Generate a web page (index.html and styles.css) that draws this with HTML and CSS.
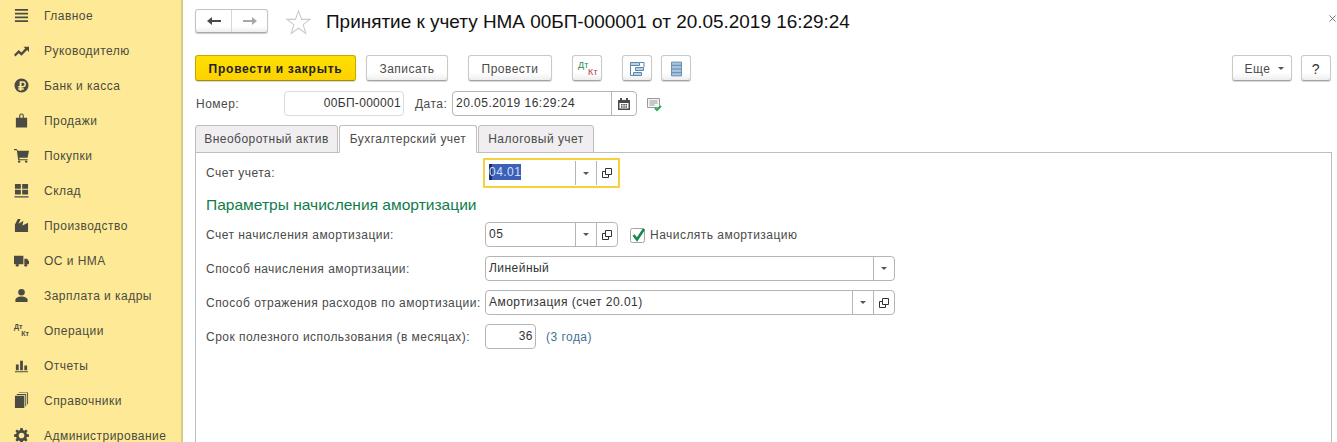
FILE: index.html
```html
<!DOCTYPE html>
<html lang="ru">
<head>
<meta charset="utf-8">
<title>Принятие к учету НМА</title>
<link rel="stylesheet" href="styles.css">
</head>
<body>
<div class="app">
  <nav class="side">
    <a class="nav-item"><svg class="nav-ico" viewBox="0 0 16 16"><path d="M1 1h14v2H1zM1 5h14v2H1zM1 9h14v2H1zM1 13h14v2H1z"/></svg><span>Главное</span></a>
    <a class="nav-item"><svg class="nav-ico" viewBox="0 0 16 16"><path d="M0 12.500l5-5 3 2.500 4-4.500-2-1.500h6v5.500l-2-2-6 6-3-2.500-3.500 3.500z"/></svg><span>Руководителю</span></a>
    <a class="nav-item"><svg class="nav-ico" viewBox="0 0 16 16"><path fill-rule="evenodd" d="M8 .5a7.500 7.500 0 1 1 0 15 7.500 7.500 0 0 1 0-15zM6 3.500v5H4.500v1.500H6v1H4.500v1.500H6v1h2v-1h2.500V11H8v-1h1.500a3.200 3.200 0 0 0 0-6.500zM8 5h1.500a1.700 1.700 0 0 1 0 3.500H8z"/></svg><span>Банк и касса</span></a>
    <a class="nav-item"><svg class="nav-ico" viewBox="0 0 16 16"><path fill-rule="evenodd" d="M2 5h3.500V3a2.500 2.500 0 0 1 5 0v2H14v10.500H2zM6.700 5h2.600V3a1.300 1.300 0 0 0-2.600 0z"/></svg><span>Продажи</span></a>
    <a class="nav-item"><svg class="nav-ico" viewBox="0 0 16 16"><path d="M0 1h3l1 2h12l-1.500 7.500H5.500L6 12h8.500v1h-10L3 2.500H0z"/><circle cx="5.500" cy="14.500" r="1.300"/><circle cx="13" cy="14.500" r="1.300"/></svg><span>Покупки</span></a>
    <a class="nav-item"><svg class="nav-ico" viewBox="0 0 16 16"><path d="M1 1h6.300v5H1zM8.700 1H15v5H8.700zM1 7.300h6.300v5H1zM8.700 7.300H15v5H8.700zM.5 14h15v1.500H.5z"/></svg><span>Склад</span></a>
    <a class="nav-item"><svg class="nav-ico" viewBox="0 0 16 16"><path d="M1 15V7l3-6h3L5 6l5-3-1 5 6-3v10z"/></svg><span>Производство</span></a>
    <a class="nav-item"><svg class="nav-ico" viewBox="0 0 16 16"><path d="M0 3h10v9H0zM11 6h3l2 3v3h-5z"/><circle cx="3.500" cy="13" r="1.600"/><circle cx="12.500" cy="13" r="1.600"/></svg><span>ОС и НМА</span></a>
    <a class="nav-item"><svg class="nav-ico" viewBox="0 0 16 16"><circle cx="8" cy="4.500" r="3.500"/><path d="M1.500 15v-2.500c0-2 3-3.500 6.500-3.500s6.500 1.500 6.500 3.500V15z"/></svg><span>Зарплата и кадры</span></a>
    <a class="nav-item"><span class="nav-ico dk"><b>Дт</b><b class="dk-k">Кт</b></span><span>Операции</span></a>
    <a class="nav-item"><svg class="nav-ico" viewBox="0 0 16 16"><path d="M2 7h3v6H2zM6.500 3h3v10h-3zM11 8h3v5h-3zM1 14h14v1.300H1z"/></svg><span>Отчеты</span></a>
    <a class="nav-item"><svg class="nav-ico" viewBox="0 0 16 16"><path d="M1 3h10v13H1zM12 2H3V1h10v13h-1zM14 0H5v-.500h10V12h-1z"/></svg><span>Справочники</span></a>
    <a class="nav-item"><svg class="nav-ico" viewBox="0 0 16 16"><path fill-rule="evenodd" d="M6.800 0h2.400l.4 2.200 1.400.6L12.800 1.500l1.700 1.700-1.300 1.800.6 1.400 2.200.4v2.400l-2.200.4-.6 1.400 1.300 1.800-1.700 1.700-1.800-1.300-1.400.6-.4 2.200H6.800l-.4-2.200-1.400-.6-1.800 1.300-1.700-1.700 1.300-1.800-.6-1.400L0 9.200V6.800l2.200-.4.600-1.400-1.300-1.800 1.700-1.700L5 2.800l1.400-.6zM8 5a3 3 0 1 0 0 6 3 3 0 0 0 0-6z"/></svg><span>Администрирование</span></a>
  </nav>

  <main class="main">
    <header class="title-row">
      <div class="nav-btns">
        <span class="nav-btn"><svg class="arrow" viewBox="0 0 14 10"><path d="M0 5l5-4v3h9v2H5v3z" fill="#4a4a4a"/></svg></span>
        <span class="nav-btn"><svg class="arrow" viewBox="0 0 14 10"><path d="M14 5L9 1v3H0v2h9v3z" fill="#a8a8a8"/></svg></span>
      </div>
      <svg class="star" viewBox="0 0 24 24"><path d="M12 1l3 8h8l-6.500 5 2.500 8.500-7-5-7 5L7.500 14 1 9h8z" fill="none" stroke="#c9c9c9"/></svg>
      <h1 class="title">Принятие к учету НМА 00БП-000001 от 20.05.2019 16:29:24</h1>
      <svg class="close" viewBox="0 0 8 8"><path d="M.5.5l7 7M7.500.5l-7 7" fill="none" stroke="#666"/></svg>
    </header>

    <div class="cmd-row">
      <button class="btn primary">Провести и закрыть</button>
      <button class="btn save">Записать</button>
      <button class="btn post">Провести</button>
      <button class="btn icon dt"><span class="dt-d">Дт</span><span class="dt-k">Кт</span></button>
      <button class="btn icon tree"><svg viewBox="0 0 16 16" class="btn-svg"><path d="M1.500 1.500h9v3h-9zM6.500 6.500h8v3h-8zM4.500 11.500h8v3h-8z" fill="#b9d0e6" stroke="#5b87ab"/><path d="M1.500 5v9.500h3M11 1.500h4V6" fill="none" stroke="#5b87ab"/></svg></button>
      <button class="btn icon list"><svg viewBox="0 0 12 16" class="btn-svg narrow"><path d="M.5.5h11v15H.5z" fill="#a9c3dc" stroke="#5b87ab"/><path d="M.5 4h11M.5 8h11M.5 12h11" stroke="#5b87ab"/></svg></button>
      <span class="spacer"></span>
      <button class="btn more">Еще<i class="caret"></i></button>
      <button class="btn help">?</button>
    </div>

    <div class="doc-row">
      <label class="doc-label">Номер:</label>
      <span class="field number">00БП-000001</span>
      <label class="doc-label date-label">Дата:</label>
      <span class="field date"><span class="val">20.05.2019 16:29:24</span><span class="addon wide"><svg viewBox="0 0 12 12" class="cal"><path d="M0 2h12v10H0z" fill="#4a4a4a"/><path d="M2 0h2v3H2zM8 0h2v3H8z" fill="#4a4a4a"/><path d="M1.500 5h9v5.500h-9z" fill="#fff"/><path d="M3 6h1.500v1.500H3zM5.300 6h1.500v1.500H5.300zM7.500 6H9v1.500H7.500zM3 8.300h1.500v1.500H3zM5.300 8.300h1.500v1.500H5.300zM7.500 8.300H9v1.500H7.500z" fill="#4a4a4a"/></svg></span></span>
      <svg class="status" viewBox="0 0 16 14"><path d="M.5.500h12v9H.5z" fill="#f4f4f4" stroke="#9a9a9a"/><path d="M2.500 3h8M2.500 5h8M2.500 7h5" stroke="#9a9a9a"/><path d="M8 10l2 2 4-4" fill="none" stroke="#2fa84f" stroke-width="2"/></svg>
    </div>

    <div class="tabs">
      <span class="tab t1">Внеоборотный актив</span>
      <span class="tab active t2">Бухгалтерский учет</span>
      <span class="tab t3">Налоговый учет</span>
    </div>

    <section class="panel">
      <div class="form-row first">
        <span class="lbl">Счет учета:</span>
        <span class="focus-ring">
          <span class="field plain"><span class="val"><span class="sel">04.01</span></span><span class="addon"><i class="caret"></i></span><span class="addon"><svg class="open" viewBox="0 0 10 10"><path d="M3.500.500h6v6h-6zM3.500 3.500H.5v6h6V6.500" fill="none" stroke="#333"/></svg></span></span>
        </span>
      </div>
      <h2 class="group">Параметры начисления амортизации</h2>
      <div class="form-row">
        <span class="lbl">Счет начисления амортизации:</span>
        <span class="field acct"><span class="val">05</span><span class="addon"><i class="caret"></i></span><span class="addon"><svg class="open" viewBox="0 0 10 10"><path d="M3.500.500h6v6h-6zM3.500 3.500H.5v6h6V6.500" fill="none" stroke="#333"/></svg></span></span>
        <span class="check"><svg viewBox="0 0 16 16" class="check-svg"><path d="M.5 3.500a2 2 0 0 1 2-2h10a2 2 0 0 1 2 2v10a2 2 0 0 1-2 2h-10a2 2 0 0 1-2-2z" fill="#fff" stroke="#a5a5a5"/><path d="M3.500 8l3.500 4.500L14 2" fill="none" stroke="#158a55" stroke-width="2.600"/></svg>Начислять амортизацию</span>
      </div>
      <div class="form-row">
        <span class="lbl">Способ начисления амортизации:</span>
        <span class="field long"><span class="val">Линейный</span><span class="addon"><i class="caret"></i></span></span>
      </div>
      <div class="form-row">
        <span class="lbl">Способ отражения расходов по амортизации:</span>
        <span class="field long"><span class="val">Амортизация (счет 20.01)</span><span class="addon"><i class="caret"></i></span><span class="addon"><svg class="open" viewBox="0 0 10 10"><path d="M3.500.500h6v6h-6zM3.500 3.500H.5v6h6V6.500" fill="none" stroke="#333"/></svg></span></span>
      </div>
      <div class="form-row">
        <span class="lbl">Срок полезного использования (в месяцах):</span>
        <span class="field months">36</span>
        <span class="note">(3 года)</span>
      </div>
    </section>
  </main>
</div>
</body>
</html>
```
FILE: styles.css
```css
* { box-sizing: border-box; }
html, body { margin: 0; height: 100%; overflow: hidden; background: #fff; }
body { font: 12px "Liberation Sans", Arial, sans-serif; color: #4a4a4a; letter-spacing: .47px; }
.app { display: flex; height: 442px; }

.side { width: 183px; flex: none; background: #feea96; border-right: 2px solid #d9cc80; overflow: hidden; }
.nav-item { display: flex; align-items: center; height: 35px; padding-left: 14px; gap: 15px; color: #4a4a40; white-space: nowrap; }
.nav-item:first-child { height: 31px; margin-bottom: 2px; }
.nav-ico { width: 15px; height: 15px; flex: none; fill: #4b4b43; overflow: visible; }
.dk { display: flex; flex-direction: column; font-size: 7px; line-height: 7px; letter-spacing: 0; }
.dk-k { align-self: flex-end; }

.main { flex: 1; min-width: 0; padding-left: 12px; padding-right: 6px; }
.title-row { display: flex; align-items: center; height: 42px; }
.nav-btns { display: flex; width: 73px; height: 24px; border: 1px solid #c4c4c4; border-bottom-color: #a9a9a9; border-radius: 3px; background: linear-gradient(#fff 75%, #eee); box-shadow: 0 1px 1px #ccc; }
.nav-btn { flex: 1; display: flex; align-items: center; justify-content: center; }
.nav-btn + .nav-btn { border-left: 1px solid #d6d6d6; }
.arrow { width: 14px; height: 10px; }
.star { width: 25px; height: 25px; margin-left: 18px; margin-top: 2px; flex: none; }
.title { margin: 2px 0 0 15px; font-size: 18.95px; font-weight: 400; color: #111; letter-spacing: 0; white-space: nowrap; flex: 1; }
.close { width: 7px; height: 7px; flex: none; margin-right: -5px; margin-top: -6px; }

.cmd-row { display: flex; height: 26px; margin-top: 13px; }
.btn { height: 26px; padding: 1px 0 0; font: inherit; letter-spacing: inherit; color: #4a4a4a; background: linear-gradient(#fff 70%, #eee); border: 1px solid #c9c9c9; border-bottom-color: #a3a3a3; border-radius: 3px; box-shadow: 0 1px 1px #d8d8d8; flex: none; display: flex; align-items: center; justify-content: center; }
.primary { width: 161px; background: linear-gradient(#ffe000, #fcd200); border-color: #c9a900; border-bottom-color: #a58b00; font-weight: 700; color: #222; letter-spacing: .75px; }
.save { width: 82px; margin-left: 10px; }
.post { width: 84px; margin-left: 20px; }
.icon { width: 30px; }
.dt { margin-left: 20px; position: relative; font-size: 9px; letter-spacing: .2px; line-height: 8px; }
.dt-d { color: #1f8a4f; position: absolute; left: 5px; top: 5px; }
.dt-k { color: #b5403c; position: absolute; left: 15px; top: 12px; }
.tree { margin-left: 20px; }
.list { margin-left: 9px; }
.btn-svg { width: 16px; height: 16px; }
.narrow { width: 11px; }
.spacer { flex: 1; }
.more { width: 60px; gap: 8px; padding-left: 5px; }
.help { width: 30px; margin-left: 9px; font-size: 14px; color: #333; }
.caret { display: inline-block; width: 0; height: 0; border: 3px solid transparent; border-top: 3px solid #555; border-bottom: 0; }

.doc-row { display: flex; align-items: center; height: 25px; margin-top: 10px; }
.doc-label { width: 89px; padding-left: 1px; }
.date-label { width: 48px; padding-left: 11px; }
.field { display: flex; align-items: stretch; height: 25px; background: #fff; border: 1px solid #b5b5b5; border-radius: 4px; color: #333; line-height: 23px; flex: none; }
.val { flex: 1; padding-left: 3px; white-space: nowrap; min-width: 0; }
.addon { width: 21px; flex: none; border-left: 1px solid #b5b5b5; display: flex; align-items: center; justify-content: center; }
.addon.wide { width: 25px; }
.number { width: 120px; justify-content: flex-end; padding-right: 2px; border-color: #dcdcdc; letter-spacing: .3px; }
.date { width: 185px; }
.cal { width: 12px; height: 12px; }
.status { width: 16px; height: 14px; margin-left: 10px; margin-top: 2px; }

.tabs { display: flex; height: 28px; margin-top: 9px; gap: 1px; position: relative; z-index: 1; }
.tab { height: 28px; display: flex; align-items: center; justify-content: center; background: #f0eef0; border: 1px solid #bdbdbd; border-radius: 3px 3px 0 0; white-space: nowrap; color: #4a4a4a; }
.t1 { width: 143px; }
.t2 { width: 138px; }
.t3 { width: 116px; }
.tab.active { background: #fff; border-bottom-color: #fff; }

.panel { height: 300px; margin-top: -1px; width: 1137px; border: 1px solid #bdbdbd; border-bottom: 0; padding: 5px 0 0 10px; }
.form-row { display: flex; align-items: center; height: 25px; margin-bottom: 9px; }
.form-row.first { height: 30px; margin-bottom: 0; }
.lbl { width: 279px; flex: none; white-space: nowrap; }
.focus-ring { margin-left: -2px; display: block; flex: none; width: 137px; height: 30px; border: 2px solid #f6d13d; }
.plain { border: 0; height: 26px; border-radius: 0; width: 100%; padding: 0 1px; line-height: 25px; }
.plain .addon { margin: 1px 0; }
.sel { background: #3d5fb8; color: #cfe0ff; display: inline-block; line-height: 16px; box-shadow: inset 3px 0 #1c2f66; }
.acct { width: 133px; }
.long { width: 410px; }
.months { width: 51px; justify-content: flex-end; padding-right: 2px; }
.group { margin: 7px 0 9px; height: 18px; font-size: 15.55px; line-height: 20px; font-weight: 400; letter-spacing: 0; color: #0f7d4b; white-space: nowrap; }
.check { display: flex; align-items: center; margin-left: 12px; gap: 4px; }
.check-svg { width: 16px; height: 16px; overflow: visible; }
.note { margin-left: 10px; color: #3f7395; }
.open { width: 10px; height: 10px; }
```
